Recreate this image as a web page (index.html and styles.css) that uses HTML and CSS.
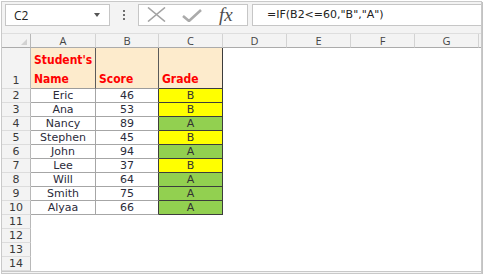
FILE: index.html
```html
<!doctype html>
<html lang="en">
    <head>
        <meta charset="UTF-8" />
        <title>Grades</title>
        <link rel="stylesheet" href="styles.css">
    </head>
    <body>
        <div class="frame">
            <div class="toolbar">
                <div class="namebox">
                    <span>C2</span>
                    <span class="caret"></span>
                </div>
                <div class="grip"><i></i><i></i><i></i></div>
                <div class="fx-buttons">
                    <svg class="icon-cancel" width="19" height="15" viewBox="0 0 19 15">
                        <path d="M1 0.5 L18 14.5 M18 0.5 L1 14.5" stroke="#a3a3a3" stroke-width="1.6" fill="none" />
                    </svg>
                    <svg class="icon-enter" width="20" height="13" viewBox="0 0 20 13">
                        <path d="M1 7 L7 12 L19 1" stroke="#ababab" stroke-width="2.6" fill="none" />
                    </svg>
                    <span class="fx">fx</span>
                </div>
                <div class="formula">=IF(B2&lt;=60,"B","A")</div>
            </div>
            <div class="sheet">
                <div class="corner"></div>
                <div class="ch">A</div>
                <div class="ch">B</div>
                <div class="ch">C</div>
                <div class="ch">D</div>
                <div class="ch">E</div>
                <div class="ch">F</div>
                <div class="ch">G</div>
                <div class="ch ch-rest"></div>

                <div class="rh rh-tall">1</div>
                <div class="hd hd-a"><span>Student's</span><span>Name</span></div>
                <div class="hd hd-b"><span>Score</span></div>
                <div class="hd hd-c"><span>Grade</span></div>
                <div class="blank"></div>

                <div class="rh">2</div>
                <div class="c name">Eric</div>
                <div class="c num">46</div>
                <div class="c grade b">B</div>
                <div class="blank"></div>

                <div class="rh">3</div>
                <div class="c name">Ana</div>
                <div class="c num">53</div>
                <div class="c grade b">B</div>
                <div class="blank"></div>

                <div class="rh">4</div>
                <div class="c name">Nancy</div>
                <div class="c num">89</div>
                <div class="c grade a">A</div>
                <div class="blank"></div>

                <div class="rh">5</div>
                <div class="c name">Stephen</div>
                <div class="c num">45</div>
                <div class="c grade b">B</div>
                <div class="blank"></div>

                <div class="rh">6</div>
                <div class="c name">John</div>
                <div class="c num">94</div>
                <div class="c grade a">A</div>
                <div class="blank"></div>

                <div class="rh">7</div>
                <div class="c name">Lee</div>
                <div class="c num">37</div>
                <div class="c grade b">B</div>
                <div class="blank"></div>

                <div class="rh">8</div>
                <div class="c name">Will</div>
                <div class="c num">64</div>
                <div class="c grade a">A</div>
                <div class="blank"></div>

                <div class="rh">9</div>
                <div class="c name">Smith</div>
                <div class="c num">75</div>
                <div class="c grade a">A</div>
                <div class="blank"></div>

                <div class="rh">10</div>
                <div class="c name">Alyaa</div>
                <div class="c num">66</div>
                <div class="c grade a">A</div>
                <div class="blank"></div>

                <div class="rh">11</div>
                <div class="blank blank-row"></div>
                <div class="rh">12</div>
                <div class="blank blank-row"></div>
                <div class="rh">13</div>
                <div class="blank blank-row"></div>
                <div class="rh">14</div>
                <div class="blank blank-row"></div>
            </div>
        </div>
    </body>
</html>
```

FILE: styles.css
```css
body {
    margin: 0;
    background: #ffffff;
    font-family: "DejaVu Sans", sans-serif;
}
.frame {
    margin: 1px 0 0 1px;
    width: 479px;
    height: 271px;
    border: 1px solid #c9c9c9;
    background: #f4f4f4;
    box-shadow: 1px 1px 0 #c2c2c2;
    overflow: hidden;
}
.toolbar {
    display: flex;
    align-items: flex-start;
    box-sizing: border-box;
    height: 32px;
    padding: 2px 0 0 3px;
    background: #f3f3f3;
    border-bottom: 1px solid #dedede;
}
.namebox {
    box-sizing: border-box;
    width: 105px;
    height: 22px;
    border: 1px solid #c6c6c6;
    background: #ffffff;
    display: flex;
    align-items: center;
    justify-content: space-between;
    padding: 0 9px 0 8px;
    font-family: "Open Sans", sans-serif;
    font-size: 12px;
    color: #222222;
}
.caret {
    width: 0;
    height: 0;
    border-left: 3.5px solid transparent;
    border-right: 3.5px solid transparent;
    border-top: 4px solid #555555;
}
.grip {
    width: 28px;
    height: 22px;
    display: flex;
    flex-direction: column;
    align-items: center;
    justify-content: center;
    gap: 2px;
}
.grip i {
    display: block;
    width: 2px;
    height: 2px;
    background: #6f6f6f;
}
.fx-buttons {
    box-sizing: border-box;
    width: 110px;
    height: 22px;
    border: 1px solid #c6c6c6;
    background: #ffffff;
    display: flex;
    align-items: center;
    padding-left: 8px;
}
.icon-cancel {
    margin-top: -1px;
}
.icon-enter {
    margin-left: 16px;
    margin-top: 1px;
}
.fx {
    margin-left: 17px;
    font-family: "Liberation Serif", serif;
    font-style: italic;
    font-size: 19px;
    line-height: 20px;
    color: #4d4d4d;
}
.formula {
    flex: 1;
    box-sizing: border-box;
    height: 22px;
    margin-left: 4px;
    border: 1px solid #c6c6c6;
    border-right: none;
    background: #ffffff;
    padding-left: 14px;
    font-size: 11px;
    line-height: 19px;
    color: #222222;
}
.sheet {
    display: grid;
    grid-template-columns: 29px 65px 63px 64px 64px 64px 64px 64px 1fr;
    grid-template-rows: 14px 41px repeat(13, 14px);
    background: #ffffff;
    border-bottom: 1px solid #c8c8c8;
    font-size: 11px;
    color: #2b2b3a;
}
.sheet > div {
    box-sizing: border-box;
}
.corner {
    position: relative;
    background: #f3f3f3;
    border-right: 1px solid #b8b8b8;
    border-bottom: 1px solid #ababab;
}
.corner::after {
    content: "";
    position: absolute;
    right: 3px;
    bottom: 2px;
    border-left: 6px solid transparent;
    border-bottom: 6px solid #d2d2d2;
}
.ch {
    background: #f3f3f3;
    border-right: 1px solid #d3d3d3;
    border-bottom: 1px solid #ababab;
    text-align: center;
    font-family: "Open Sans", sans-serif;
    font-size: 11px;
    line-height: 13px;
    color: #444444;
}
.ch-rest {
    border-right: none;
}
.rh {
    background: #f3f3f3;
    border-right: 1px solid #b8b8b8;
    border-bottom: 1px solid #dcdcdc;
    text-align: center;
    line-height: 13px;
    color: #3a3a3a;
}
.rh-tall {
    display: flex;
    align-items: flex-end;
    justify-content: center;
    padding-bottom: 1px;
}
.hd {
    display: flex;
    flex-direction: column;
    justify-content: flex-end;
    padding: 0 3px;
    background: #fdebcc;
    border-right: 1px solid #5a5a5a;
    border-bottom: 1px solid #9c9c9c;
    font-family: "DejaVu Sans Condensed", "Liberation Sans", sans-serif;
    font-size: 12px;
    font-weight: bold;
    line-height: 20px;
    color: #ff0000;
}
.hd span:last-child {
    line-height: 18px;
}
.hd-c {
    border-right-color: #3c3c3c;
    border-bottom-color: #3c3c3c;
}
.c {
    text-align: center;
    line-height: 13px;
    border-bottom: 1px solid #a6a6a6;
    border-right: 1px solid #a6a6a6;
}
.num {
    border-right-color: #3c3c3c;
}
.grade {
    border-right-color: #3c3c3c;
    border-bottom-color: #3c3c3c;
    color: #333333;
}
.grade.b {
    background: #ffff00;
}
.grade.a {
    background: #92d050;
}
.blank {
    grid-column: 5 / -1;
}
.blank-row {
    grid-column: 2 / -1;
}
```
